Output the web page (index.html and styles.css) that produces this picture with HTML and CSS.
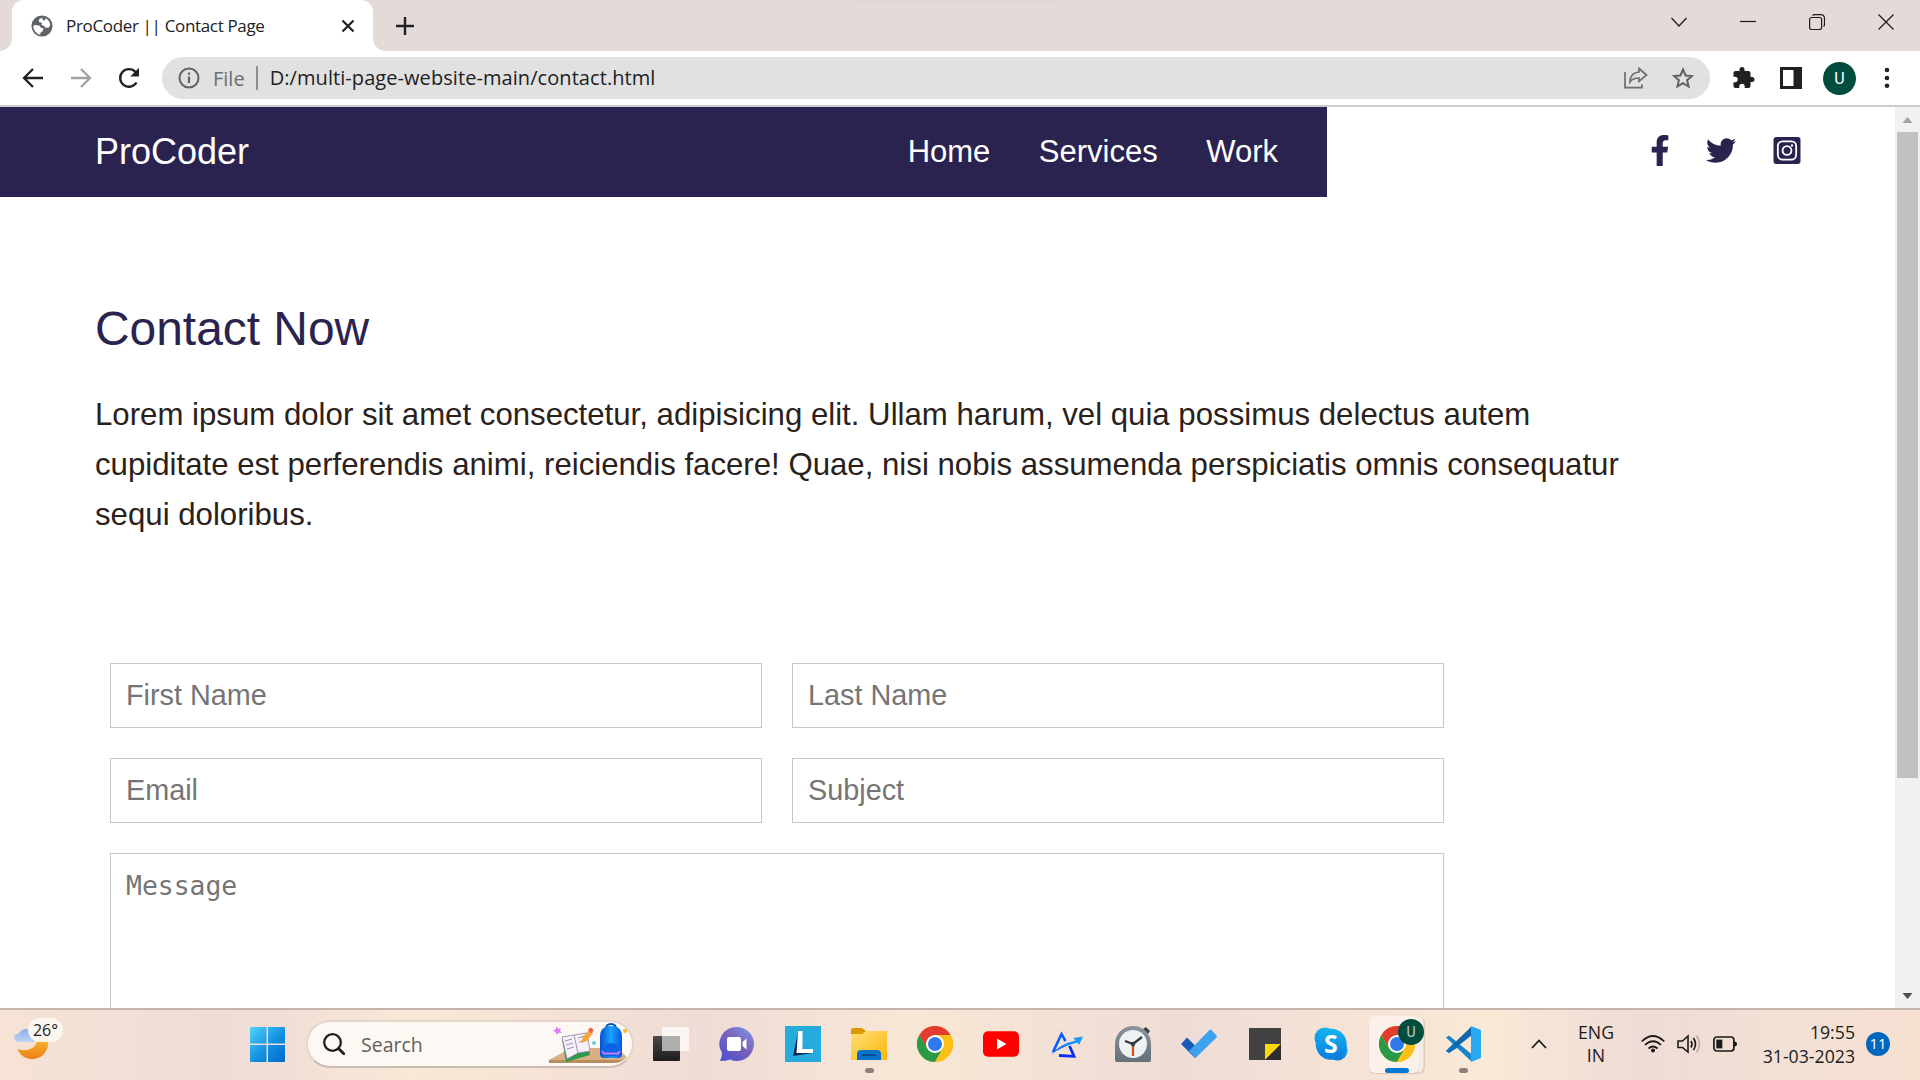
FILE: index.html
```html
<!DOCTYPE html>
<html lang="en">
<head>
<meta charset="utf-8">
<title>ProCoder || Contact Page</title>
<link rel="stylesheet" href="styles.css">
</head>
<body>
<svg class="defs" width="0" height="0" aria-hidden="true">
  <defs>
    <linearGradient id="winBlue" x1="0" y1="0" x2="1" y2="1"><stop offset="0" stop-color="#4fd3ff"/><stop offset=".55" stop-color="#1490df"/><stop offset="1" stop-color="#0069cc"/></linearGradient>
    <linearGradient id="moon" x1="0" y1="0" x2="0" y2="1"><stop offset="0" stop-color="#f3c52f"/><stop offset="1" stop-color="#f07d1a"/></linearGradient>
    <linearGradient id="cloud" x1="0" y1="0" x2="0" y2="1"><stop offset="0" stop-color="#8eaeea"/><stop offset="1" stop-color="#bcd4f6"/></linearGradient>
    <linearGradient id="chat" x1="1" y1="0" x2=".2" y2="1"><stop offset="0" stop-color="#7b9cf0"/><stop offset=".5" stop-color="#7a63b8"/><stop offset="1" stop-color="#5052d0"/></linearGradient>
    <linearGradient id="folder" x1="0" y1="0" x2="1" y2="1"><stop offset="0" stop-color="#ffdf78"/><stop offset="1" stop-color="#fbb70c"/></linearGradient>
    <linearGradient id="dark" x1="0" y1="0" x2="0" y2="1"><stop offset="0" stop-color="#4a4a48"/><stop offset="1" stop-color="#1d1d1d"/></linearGradient>
    <linearGradient id="steel" x1="0" y1="0" x2="0" y2="1"><stop offset="0" stop-color="#8a939b"/><stop offset="1" stop-color="#64707b"/></linearGradient>
    <linearGradient id="skype" x1="0" y1="0" x2="0" y2="1"><stop offset="0" stop-color="#14b4f0"/><stop offset="1" stop-color="#0c7bdc"/></linearGradient>
    <linearGradient id="bag" x1="0" y1="0" x2="1" y2="0"><stop offset="0" stop-color="#0b4fd0"/><stop offset=".5" stop-color="#17a5ff"/><stop offset="1" stop-color="#0b55dc"/></linearGradient>
    <linearGradient id="arrowBlue" x1="0" y1="1" x2="1" y2="0"><stop offset="0" stop-color="#0a62ff"/><stop offset="1" stop-color="#1aa4ff"/></linearGradient>
    <symbol id="chrome" viewBox="0 0 36 36">
      <circle cx="18" cy="18" r="18" fill="#fbc116"/>
      <path d="M2.4 9A18 18 0 0 1 33.6 9L18 9L10.2 22.5z" fill="#e33b2e"/>
      <path d="M2.4 9A18 18 0 0 0 18 36L25.8 22.5L10.2 22.5z" fill="#2a9a48"/>
      <path d="M18 9H33.6A18 18 0 0 1 18 36L25.8 22.5z" fill="#fbc116"/>
      <circle cx="18" cy="18" r="9" fill="#fff"/><circle cx="18" cy="18" r="7" fill="#3079ed"/>
    </symbol>
  </defs>
</svg>

<header class="tabstrip">
  <div class="tab">
    <svg class="favicon" viewBox="0 0 24 24"><circle cx="12" cy="12" r="11.500" fill="#5f6368"/><path fill="#fff" d="M4 11l5 .5 2 2.500 2.500.5-.5 3-2.500 1.500-.5 2.500A9.500 9.500 0 0 1 2.500 12zM12.500 2.600l-4 2.400.5 3 3 .5-.5 2.500 3 1 1 2 4-.5 1.500-2.500A9.500 9.500 0 0 0 16 3.500l-1 2.500-2.500-.5z"/></svg>
    <span class="tab-title">ProCoder || Contact Page</span>
    <svg class="tab-close" viewBox="0 0 14 14"><path d="M1.500 1.500l11 11M12.500 1.500l-11 11" stroke="#202124" stroke-width="2.200"/></svg>
  </div>
  <svg class="tab-new" viewBox="0 0 18 18"><path d="M9 0v18M0 9h18" stroke="#202124" stroke-width="2.400"/></svg>
  <div class="window-controls">
    <svg viewBox="0 0 16 16"><path d="M.5 4L8 12 15.500 4"/></svg>
    <svg viewBox="0 0 16 16"><path d="M0 7.500h16"/></svg>
    <svg viewBox="0 0 16 16"><rect x=".6" y="3.500" width="12" height="12" rx="2"/><path d="M3.500 1.500Q4 .6 6 .6h5.500q4 0 4 4V10q0 2-1 2.500"/></svg>
    <svg viewBox="0 0 16 16"><path d="M.5.5l15 15M15.500.5l-15 15"/></svg>
  </div>
</header>

<div class="toolbar">
  <div class="nav-buttons">
    <svg viewBox="0 0 22 22"><path d="M21 11H2.500M11 2L2 11l9 9" fill="none" stroke="#202124" stroke-width="2.300"/></svg>
    <svg viewBox="0 0 22 22"><path d="M1 11h18.500M11 2l9 9-9 9" fill="none" stroke="#a2a2a4" stroke-width="2.300"/></svg>
    <svg viewBox="0 0 22 22"><path d="M18.500 15.500A8.800 8.800 0 1 1 17.500 5" fill="none" stroke="#202124" stroke-width="2.400"/><path d="M21 .8v8.700h-8.700z" fill="#202124"/></svg>
  </div>
  <div class="omnibox">
    <svg class="info" viewBox="0 0 22 22"><circle cx="11" cy="11" r="9.500" fill="none" stroke="#5f6368" stroke-width="2"/><path d="M11 9.500v6.500M11 5.500v2.300" stroke="#5f6368" stroke-width="2.200"/></svg>
    <span class="scheme">File</span>
    <span class="url">D:/multi-page-website-main/contact.html</span>
    <svg class="share" viewBox="0 0 24 22"><g fill="none" stroke="#6b6e72" stroke-width="1.700"><path d="M1 5v15.700h17v-3.500"/><path d="M15 1.500l7.500 6.500-7.500 6.500V11C11 11 8 12 6 15c0-6 3.500-9.500 9-10z"/></g></svg>
    <svg class="star" viewBox="0 0 22 22"><path d="M11 2.500l2.600 6 6.400.5-4.900 4.200 1.500 6.300L11 16.200 5.400 19.500l1.500-6.300L2 9l6.400-.5z" fill="none" stroke="#5f6368" stroke-width="2"/></svg>
  </div>
  <div class="actions">
    <svg viewBox="2 1 21 22"><path fill="#202124" d="M20.500 11H19V7c0-1.100-.9-2-2-2h-4V3.500a2.500 2.500 0 0 0-5 0V5H4c-1.100 0-2 .9-2 2v3.800h1.500a2.700 2.700 0 0 1 0 5.400H2V20c0 1.100.9 2 2 2h3.800v-1.500a2.700 2.700 0 0 1 5.400 0V22H17c1.100 0 2-.9 2-2v-4h1.500a2.500 2.500 0 0 0 0-5z"/></svg>
    <svg viewBox="0 0 22 22"><rect x="1.500" y="1.500" width="19" height="19" fill="#fff" stroke="#202124" stroke-width="3"/><path d="M13.500 1H21v20h-7.500z" fill="#202124"/></svg>
    <span class="avatar">U</span>
    <svg class="menu-dots" viewBox="0 0 22 22"><g fill="#202124"><circle cx="11" cy="3" r="2.300"/><circle cx="11" cy="11" r="2.300"/><circle cx="11" cy="18.700" r="2.300"/></g></svg>
  </div>
</div>

<main class="viewport">
  <div class="page">
    <div class="site-header">
      <nav class="site-nav">
        <span class="brand">ProCoder</span>
        <ul class="links"><li>Home</li><li>Services</li><li>Work</li></ul>
      </nav>
      <div class="social">
        <svg class="fb" viewBox="22 0 275 512"><path d="M279.140 288l14.220-92.660h-88.910v-60.130c0-25.350 12.420-50.060 52.240-50.060h40.420V6.260S260.430 0 225.360 0c-73.220 0-121.080 44.380-121.080 124.720v70.620H22.890V288h81.390v224h100.170V288z"/></svg>
        <svg class="tw" viewBox="0 48 512 416"><path d="M459.370 151.716c.325 4.548.325 9.097.325 13.645 0 138.720-105.583 298.558-298.558 298.558-59.452 0-114.680-17.219-161.137-47.106 8.447.974 16.568 1.299 25.340 1.299 49.055 0 94.213-16.568 130.274-44.832-46.132-.975-84.792-31.188-98.112-72.772 6.498.974 12.995 1.624 19.818 1.624 9.421 0 18.843-1.300 27.614-3.573-48.081-9.747-84.143-51.980-84.143-102.985v-1.299c13.969 7.797 30.214 12.670 47.431 13.319-28.264-18.843-46.781-51.005-46.781-87.391 0-19.492 5.197-37.360 14.294-52.954 51.655 63.675 129.300 105.258 216.365 109.807-1.624-7.797-2.599-15.918-2.599-24.040 0-57.828 46.782-104.934 104.934-104.934 30.213 0 57.502 12.670 76.670 33.137 23.715-4.548 46.456-13.320 66.599-25.340-7.798 24.366-24.366 44.833-46.132 57.827 21.117-2.273 41.584-8.122 60.426-16.243-14.292 20.791-32.161 39.308-52.628 54.253z"/></svg>
        <svg class="ig" viewBox="0 0 28 28"><rect width="28" height="28" rx="3"/><g fill="none" stroke="#fff" stroke-width="1.900"><rect x="4.500" y="4.500" width="19" height="19" rx="5"/><circle cx="14" cy="14" r="4.600"/></g><circle cx="19.200" cy="8.800" r="1.200" fill="#fff"/></svg>
      </div>
    </div>
    <section class="contact">
      <h2>Contact Now</h2>
      <p>Lorem ipsum dolor sit amet consectetur, adipisicing elit. Ullam harum, vel quia possimus delectus autem<br>cupiditate est perferendis animi, reiciendis facere! Quae, nisi nobis assumenda perspiciatis omnis consequatur<br>sequi doloribus.</p>
      <form class="contact-form">
        <input type="text" placeholder="First Name">
        <input type="text" placeholder="Last Name">
        <input type="email" placeholder="Email">
        <input type="text" placeholder="Subject">
        <textarea placeholder="Message"></textarea>
      </form>
    </section>
  </div>
  <div class="scrollbar">
    <svg viewBox="0 0 10 6"><path d="M0 6L5 0l5 6z" fill="#a3a3a3"/></svg>
    <div class="thumb"></div>
    <svg class="down" viewBox="0 0 10 6"><path d="M0 0h10L5 6z" fill="#505050"/></svg>
  </div>
</main>

<footer class="taskbar">
  <div class="weather">
    <svg viewBox="0 0 36 36"><path d="M34 11a15.500 15.500 0 1 1-30.500 11.500C15 27 26 20 24 9z" fill="url(#moon)"/><path d="M4.500 15.500a4.200 4.200 0 0 1 0-8.400q3-5 8-5 7 0 8 7v6.400z" fill="url(#cloud)"/></svg>
    <span class="temp">26°</span>
  </div>
  <svg class="start" viewBox="0 0 35 35"><path fill="url(#winBlue)" d="M1 0h15.500v16.500H0V1q0-1 1-1zM18 0h16q1 0 1 1v15.500H18zM0 18h16.500v17H1q-1 0-1-1zM18 18h17v16q0 1-1 1H18z"/></svg>
  <div class="search">
    <svg class="lens" viewBox="0 0 22 22"><circle cx="9.500" cy="9.500" r="8.300" fill="none" stroke="#202020" stroke-width="2.300"/><path d="M15.500 15.500l5.300 5.300" stroke="#202020" stroke-width="2.800" stroke-linecap="round"/></svg>
    <span>Search</span>
    <svg class="art" viewBox="0 0 84 42">
      <path d="M0 37L22 25h46l10 9q-6 6-12 6H0z" fill="#d9b084"/><path d="M0 37h74q-4 3-9 3H0z" fill="#b98c60"/>
      <path d="M7.500 3.500l1.800 2.300 3-.8-1.300 2.600 1.500 2.400-3-.3-2 2.300-.7-3-3-1.200 2.800-1.500z" fill="#dc7cf5"/>
      <path d="M13 16l24-6 4 22-24 7z" fill="#2d9a4b"/><path d="M13 14l12-2 13-2 3 18-12 2-11 6z" fill="#f5f0fa" stroke="#9180ac" stroke-width=".8"/><path d="M25 12l4 18M16 18l7-2M17 22l7-2M18 26l7-2M29 15l7-2M30 19l7-2" stroke="#8a7a9c" stroke-width=".8"/>
      <path d="M32 20l2-6 6-7 4 3-6 8z" fill="#f5a63a"/><path d="M39 7l2.500-2.500 3 2-1.500 4z" fill="#ef5c50"/>
      <circle cx="45" cy="20" r="2" fill="#67cfdb"/><circle cx="76" cy="8" r="2" fill="#ffb515"/>
      <path d="M57 6q0-5 5-5t5 5" fill="none" stroke="#0c51b4" stroke-width="2"/><path d="M51 14q0-11 11-11t11 11v17q0 4-4 4H55q-4 0-4-4z" fill="url(#bag)"/><path d="M54 28q0-8 8-8t8 8v4q-8 3-16 0z" fill="#0b62e4"/><path d="M53 28l2 2.500h14l2-2.500" fill="none" stroke="#c681fa" stroke-width="1.800"/>
    </svg>
  </div>
  <div class="apps">
    <div class="app"><svg viewBox="0 0 36 36"><rect y="10" width="27" height="25" rx="1" fill="url(#dark)"/><rect x="9" y="1" width="27" height="24" rx="1" fill="#fff" opacity=".72"/><rect x="9" y="10" width="18" height="15" fill="#a5a5a3" opacity=".75"/></svg></div>
    <div class="app"><svg viewBox="0 0 36 36"><path d="M18 1a17 17 0 1 1-7 32.500Q7 35 1 35q2-4 2-8A17 17 0 0 1 18 1z" fill="url(#chat)"/><rect x="8" y="11" width="14" height="14" rx="2" fill="#fff"/><path d="M23.500 16l4-3.500v11l-4-3.500z" fill="#fff"/></svg></div>
    <div class="app"><svg viewBox="0 0 36 36"><path d="M0 0h36v36H0z" fill="#26acdc"/><path d="M13 6L8 30l20-3-10-4z" fill="#122a5a"/><path d="M13 5h4.500v18H28v4H11.500z" fill="#fff"/></svg></div>
    <div class="app running"><svg viewBox="0 0 36 36"><path d="M0 4q0-2 2-2h9l4 3-3 4H0z" fill="#dc9800"/><path d="M0 8h11l4-3h21v29H0z" fill="url(#folder)"/><path d="M6 34V28q0-4 4-4h16q4 0 4 4v6z" fill="#0873c9"/><path d="M11 29h14" stroke="#075090" stroke-width="2"/></svg></div>
    <div class="app"><svg><use href="#chrome"/></svg></div>
    <div class="app"><svg viewBox="0 0 36 36"><rect y="5.300" width="36" height="25.500" rx="5" fill="#f00"/><path d="M14 12.500v11l9.500-5.500z" fill="#fff"/></svg></div>
    <div class="app"><svg viewBox="0 0 36 36"><path d="M4 26L12.500 8l4 7" fill="none" stroke="#0a5cff" stroke-width="2.600"/><path d="M20.500 20L25 30.300l-15-.8" fill="none" stroke="#0b2cf5" stroke-width="2.800"/><path d="M2 28.500Q11 18 26.500 14.500l-2-2.500 9.500-1.500-4 8.500-1.500-2.500Q14 20 2 28.500z" fill="url(#arrowBlue)"/></svg></div>
    <div class="app"><svg viewBox="0 0 36 36"><path d="M28 3l3-2 4 4-2 3z" fill="#39434a"/><path d="M0 18a18 18 0 0 1 36 0v16q0 2-2 2H2q-2 0-2-2z" fill="url(#steel)"/><circle cx="18" cy="18" r="14" fill="#edf1f4"/><path d="M10 15l8 3 9-7" fill="none" stroke="#31373b" stroke-width="2.300"/><path d="M18 18v12" stroke="#d84a16" stroke-width="2.200"/><circle cx="18" cy="18" r="2.200" fill="#31373b"/></svg></div>
    <div class="app"><svg viewBox="0 0 36 36"><path d="M0 18l6-6.500 13 13-5 7.500z" fill="#1a5bb8"/><path d="M8 25L28.500 4q1-1 2 0l5 5.500q.8 1 0 2L14.500 32z" fill="#3fa2ee"/></svg></div>
    <div class="app"><svg viewBox="0 0 36 36"><path d="M2 2h32v32H2z" fill="#414141"/><path d="M18 18h16L18 34z" fill="#ffd60a"/><path d="M34 18v16H18z" fill="#2d2d2d"/></svg></div>
    <div class="app"><svg viewBox="0 0 36 36"><g fill="url(#skype)"><circle cx="12" cy="12" r="10.500"/><circle cx="24.500" cy="24.500" r="10"/><circle cx="18.200" cy="18.200" r="15.500"/></g><text class="skype-s" x="18" y="27">S</text></svg></div>
    <div class="app active"><svg><use href="#chrome"/></svg><span class="profile">U</span></div>
    <div class="app running"><svg viewBox="0 0 36 36"><path d="M1 11.500l3-2 23 19v7.500z" fill="#1585cc"/><path d="M1 25L27 0v9L4 27z" fill="#0b68ae"/><path d="M1 25l7-7 7 2L4 27z" fill="#0971bd"/><path d="M26 0l9 3.500q1 .5 1 1.500v26q0 1-1 1.500L26 36z" fill="#29a9f2"/></svg></div>
  </div>
  <div class="tray">
    <svg class="chev" viewBox="0 0 16 10"><path d="M1 9l7-7.500L15 9" fill="none" stroke="#1b1b1b" stroke-width="1.800"/></svg>
    <div class="lang"><span>ENG</span><span>IN</span></div>
    <div class="status">
      <svg viewBox="0 0 24 24"><g fill="none" stroke="#1b1b1b" stroke-width="1.700"><path d="M.7 9.500q11.300-11 22.600 0M4 13q8-7.500 16 0M7.500 16.500q4.500-4 9 0"/></g><circle cx="12" cy="18.500" r="2" fill="#1b1b1b"/></svg>
      <svg viewBox="0 0 24 24"><path d="M1 9h4.500L11 4v16l-5.500-4.500H1zM14 9q2 3 0 6.500M16.500 6q4 6 0 12" fill="none" stroke="#1b1b1b" stroke-width="1.600"/><path d="M19.500 3.500q6 8.500 0 17" fill="none" stroke="#b8aaa6" stroke-width="1.500"/></svg>
      <svg viewBox="0 0 24 24"><rect x=".9" y="5" width="20" height="14" rx="3" fill="none" stroke="#1b1b1b" stroke-width="1.700"/><rect x="3.300" y="7.600" width="6" height="8.800" fill="#1b1b1b"/><path d="M21 9.500q3 0 3 2.500t-3 2.500z" fill="#1b1b1b"/></svg>
    </div>
    <div class="clock"><span>19:55</span><span>31-03-2023</span></div>
    <span class="count">11</span>
  </div>
</footer>
</body>
</html>
```

FILE: styles.css
```css
* { box-sizing: border-box; }

body {
  margin: 0;
  width: 1920px;
  height: 1080px;
  overflow: hidden;
  display: flex;
  flex-direction: column;
  font-family: "Open Sans", "Noto Sans", sans-serif;
  color: #202124;
  background: #fff;
}

svg { display: block; flex: none; }
.defs { position: absolute; }

/* Tab strip */
.tabstrip {
  height: 51px;
  flex: none;
  display: flex;
  align-items: center;
  padding-left: 12px;
  background: radial-gradient(ellipse 170px 5px at 957px 0, #ded4d1, #e4dad7);
}
.tab {
  position: relative;
  width: 361px;
  height: 51px;
  padding: 0 18px 0 19px;
  display: flex;
  align-items: center;
  background: #fff;
  border-radius: 12px 12px 0 0;
}
.tab::before, .tab::after {
  content: "";
  position: absolute;
  bottom: 0;
  width: 12px;
  height: 12px;
}
.tab::before { left: -12px; background: radial-gradient(circle at 0 0, transparent 11.5px, #fff 12px); }
.tab::after { right: -12px; background: radial-gradient(circle at 100% 0, transparent 11.5px, #fff 12px); }
.favicon { width: 22px; height: 22px; margin-right: 13px; }
.tab-title { font-size: 17px; letter-spacing: -0.34px; white-space: pre; }
.tab-close { width: 14px; height: 14px; margin-left: auto; }
.tab-new { width: 18px; height: 18px; margin-left: 23px; }
.window-controls { display: flex; gap: 52.7px; margin: 0 26.5px 8px auto; }
.window-controls svg { width: 16px; height: 16px; fill: none; stroke: #1b1b1b; stroke-width: 1.2; }

/* Toolbar */
.toolbar {
  height: 56px;
  flex: none;
  display: flex;
  align-items: center;
  padding-left: 22px;
  border-bottom: 2px solid #ccc;
}
.nav-buttons { display: flex; gap: 26px; }
.nav-buttons svg { width: 22px; height: 22px; }
.omnibox {
  width: 1548px;
  height: 42px;
  margin-left: 22px;
  padding: 0 16px;
  display: flex;
  align-items: center;
  background: #e1e1e1;
  border-radius: 21px;
  font-size: 20px;
}
.info { width: 22px; height: 22px; }
.scheme { margin-left: 13px; color: #6b6e72; }
.url { margin-left: 11px; padding-left: 12px; border-left: 2px solid #8c8e91; line-height: 24px; letter-spacing: 0.07px; }
.share { width: 24px; height: 22px; margin-left: auto; }
.star { width: 22px; height: 22px; margin-left: 24px; }
.actions { display: flex; align-items: center; margin-left: 23px; }
.actions svg { width: 22px; height: 22px; margin-right: 25px; }
.avatar {
  width: 33px;
  height: 33px;
  margin: 0 20px 0 -4px;
  border-radius: 50%;
  background: #004d40;
  color: #fff;
  font: 16px/33px Roboto, sans-serif;
  text-align: center;
}
.actions .menu-dots { margin: 0; }

/* Page viewport */
.viewport { height: 901px; flex: none; display: flex; overflow: hidden; }
.page { width: 1895px; font-family: "Liberation Sans", Arial, sans-serif; }
.site-header { display: flex; height: 90px; }
.site-nav {
  width: 1327px;
  padding: 0 49px 0 95px;
  display: flex;
  align-items: center;
  justify-content: space-between;
  background: #2b234f;
  color: #fff;
}
.brand { font-size: 36px; }
.links { display: flex; gap: 48.5px; margin: 0; padding: 0; list-style: none; font-size: 31px; }
.social { flex: 1; display: flex; align-items: center; justify-content: flex-end; padding: 0 94px 3px 0; }
.social svg { fill: #2b234f; }
.fb { width: 18px; height: 31px; }
.tw { width: 30px; height: 25px; margin-left: 37px; }
.ig { width: 28px; height: 27px; margin-left: 37px; }

.contact { padding: 90px 95px 0; }
.contact h2 { margin: 0; color: #2b234f; font-size: 47.9px; font-weight: 400; line-height: 84px; }
.contact p { margin: 19px 0 0; color: #2a211b; font-size: 31.2px; line-height: 50px; white-space: nowrap; }
.contact-form {
  width: 1334px;
  margin: 123px 0 0 15px;
  display: grid;
  grid-template-columns: 1fr 1fr;
  grid-auto-rows: 65px;
  gap: 30px;
}
.contact-form input, .contact-form textarea {
  width: 100%;
  min-width: 0;
  padding: 0 15px;
  border: 1px solid #c8c8c8;
  border-radius: 0;
  background: #fff;
  font: 28.8px "Liberation Sans", Arial, sans-serif;
}
.contact-form textarea {
  grid-column: 1 / -1;
  height: 300px;
  padding: 15px;
  resize: none;
  font: 26.4px/34px "DejaVu Sans Mono", monospace;
}
::placeholder { color: #757575; opacity: 1; }

.scrollbar {
  width: 25px;
  display: flex;
  flex-direction: column;
  align-items: center;
  padding: 10px 0 9px;
  background: #f1f1f1;
}
.scrollbar svg { width: 11px; height: 6px; }
.thumb { width: 21px; height: 646px; margin-top: 9px; background: #c1c1c1; }
.scrollbar .down { margin-top: auto; }

/* Taskbar */
.taskbar {
  height: 72px;
  flex: none;
  display: flex;
  align-items: center;
  padding-bottom: 2px;
  border-top: 2px solid #c4b5ad;
  background: linear-gradient(90deg, #f6e3d5 0, #f3e0d6 110px, #eedcd7 215px, #f2e0d6 300px, #f8e8d6 410px, #f5e2d5 560px, #eedcd6 700px, #f3e1d6 790px, #f8e7d5 910px, #f4e2d6 1040px, #efdcd6 1180px, #f5e3d6 1340px, #f9e9d6 1490px, #eedcd6 1640px, #f2e0d5 1760px, #f7e1d3 1920px);
  color: #1b1b1b;
}
.weather { position: relative; width: 50px; height: 50px; margin-left: 14px; }
.weather svg { width: 35px; height: 35px; margin-top: 8px; }
.temp {
  position: absolute;
  left: 14px;
  top: -1px;
  width: 35px;
  height: 24px;
  border-radius: 12px;
  background: rgba(252, 247, 243, .92);
  font-size: 16px;
  line-height: 24px;
  text-align: center;
}
.start { width: 35px; height: 35px; margin-left: 186px; }
.search {
  width: 328px;
  height: 48px;
  margin-left: 21px;
  padding-left: 15px;
  display: flex;
  align-items: center;
  border: 2px solid #e8d5c9;
  border-bottom-color: #cfbcb0;
  border-radius: 24px;
  background: #fdf8f4;
  color: #62605e;
  font-size: 19.5px;
}
.lens { width: 22px; height: 22px; margin-right: 16px; }
.art { width: 84px; height: 42px; margin-left: auto; margin-right: -1px; }
.apps { display: flex; margin-left: 4px; }
.app {
  position: relative;
  width: 66px;
  height: 68px;
  display: flex;
  align-items: center;
  justify-content: center;
}
.app svg { width: 36px; height: 36px; position: relative; }
.app.running::after, .app.active::after {
  content: "";
  position: absolute;
  bottom: 5px;
  left: 29px;
  width: 9px;
  height: 5px;
  border-radius: 3px;
  background: #8b827c;
}
.app.active::after { left: 21px; width: 24px; background: #0078d4; }
.app.active::before {
  content: "";
  position: absolute;
  left: 5px;
  top: 6px;
  width: 50px;
  height: 57px;
  border-radius: 6px;
  background: #fbf1ea;
  box-shadow: 0 1px 1px #dccabf, 5px 0 0 -0.5px #f8ece4, 6px 1px 1px #dccabf;
}
.profile {
  position: absolute;
  left: 34px;
  top: 9px;
  width: 26px;
  height: 26px;
  border-radius: 50%;
  background: #004d40;
  color: #b8cfc8;
  font: 14px/26px Roboto, sans-serif;
  text-align: center;
}
.skype-s { font: 700 25px "Open Sans", sans-serif; fill: #fff; text-anchor: middle; }
.tray { flex: 1; display: flex; align-items: center; padding-left: 35px; font-size: 17.7px; }
.chev { width: 16px; height: 10px; }
.lang { width: 40px; margin-left: 29px; display: flex; flex-direction: column; align-items: center; line-height: 23px; }
.status { display: flex; gap: 12px; margin-left: 25px; }
.status svg { width: 24px; height: 24px; }
.clock { width: 100px; margin-left: 18px; display: flex; flex-direction: column; align-items: flex-end; line-height: 24px; }
.count {
  width: 24px;
  height: 24px;
  margin-left: 11px;
  border-radius: 50%;
  background: #0067c0;
  color: #fff;
  font-size: 15px;
  line-height: 23px;
  text-align: center;
}
```
